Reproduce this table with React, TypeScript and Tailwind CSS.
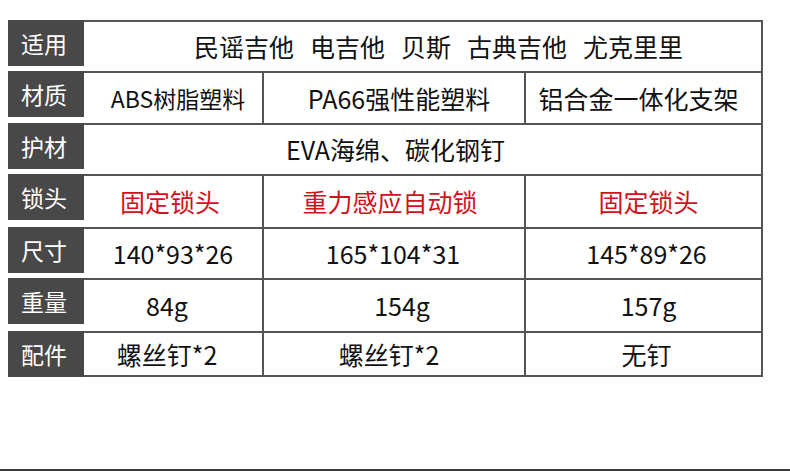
import React from "react";

const FONT = '"Noto Sans CJK SC", "Noto Sans", sans-serif';

type Cell = { text: React.ReactNode; cls?: string; w?: string };

function Row({
  label,
  h,
  cells,
  last,
}: {
  label: string;
  h: string;
  cells: Cell[];
  last?: boolean;
}) {
  return (
    <div className={`flex items-start ${h}`}>
      <div className="w-[76px] h-[46px] bg-[#484848] text-white text-[23px] leading-none flex items-center pl-[13px] shrink-0">
        {label}
      </div>
      <div
        className={`w-[679px] h-full flex border-t-2 border-r-2 border-[#555555] ${
          last ? "border-b-2" : ""
        }`}
      >
        {cells.map((c, i) => (
          <div
            key={i}
            className={`h-full flex items-center justify-center leading-none text-[25px] ${
              c.w ?? "flex-1"
            } ${i > 0 ? "border-l-2 border-[#555555]" : ""} ${c.cls ?? "text-[#111111]"}`}
          >
            {c.text}
          </div>
        ))}
      </div>
    </div>
  );
}

export default function App() {
  const red = "text-[#d0121b]";
  return (
    <div
      className="w-[790px] h-[473px] bg-white pl-[8px] pt-[20px] flex flex-col"
      style={{ fontFamily: FONT }}
    >
      <Row
        label="适用"
        h="h-[51px]"
        cells={[
          {
            text: (
              <span className="flex gap-[16px] pl-[32px] pb-[1px]">
                <span>民谣吉他</span>
                <span>电吉他</span>
                <span>贝斯</span>
                <span>古典吉他</span>
                <span>尤克里里</span>
              </span>
            ),
          },
        ]}
      />
      <Row
        label="材质"
        h="h-[52px]"
        cells={[
          { text: <span className="text-[23px] pl-[10px]">ABS树脂塑料</span>, w: "w-[178px]" },
          { text: <span className="pl-[10px]">PA66强性能塑料</span>, w: "w-[262px]" },
          { text: <span className="pr-[10px]">铝合金一体化支架</span> },
        ]}
      />
      <Row
        label="护材"
        h="h-[51px]"
        cells={[{ text: <span className="pr-[54px]">EVA海绵、碳化钢钉</span> }]}
      />
      <Row
        label="锁头"
        h="h-[53px]"
        cells={[
          { text: <span className="pr-[6px]">固定锁头</span>, w: "w-[178px]", cls: red },
          { text: <span className="pr-[8px]">重力感应自动锁</span>, w: "w-[262px]", cls: red },
          { text: <span className="pl-[10px]">固定锁头</span>, cls: red },
        ]}
      />
      <Row
        label="尺寸"
        h="h-[51px]"
        cells={[
          { text: "140*93*26", w: "w-[178px]" },
          { text: <span className="pr-[2px]">165*104*31</span>, w: "w-[262px]" },
          { text: <span className="pl-[6px]">145*89*26</span> },
        ]}
      />
      <Row
        label="重量"
        h="h-[53px]"
        cells={[
          { text: <span className="pr-[12px]">84g</span>, w: "w-[178px]" },
          { text: <span className="pl-[16px]">154g</span>, w: "w-[262px]" },
          { text: <span className="pl-[10px]">157g</span> },
        ]}
      />
      <Row
        label="配件"
        h="h-[46px]"
        last
        cells={[
          { text: <span className="pr-[12px]">螺丝钉*2</span>, w: "w-[178px]" },
          { text: <span className="pr-[10px]">螺丝钉*2</span>, w: "w-[262px]" },
          { text: <span className="pl-[6px]">无钉</span> },
        ]}
      />
      <div className="mt-[92px] -ml-[8px] w-[790px] h-[2px] bg-[#3a3a3a]" />
    </div>
  );
}
